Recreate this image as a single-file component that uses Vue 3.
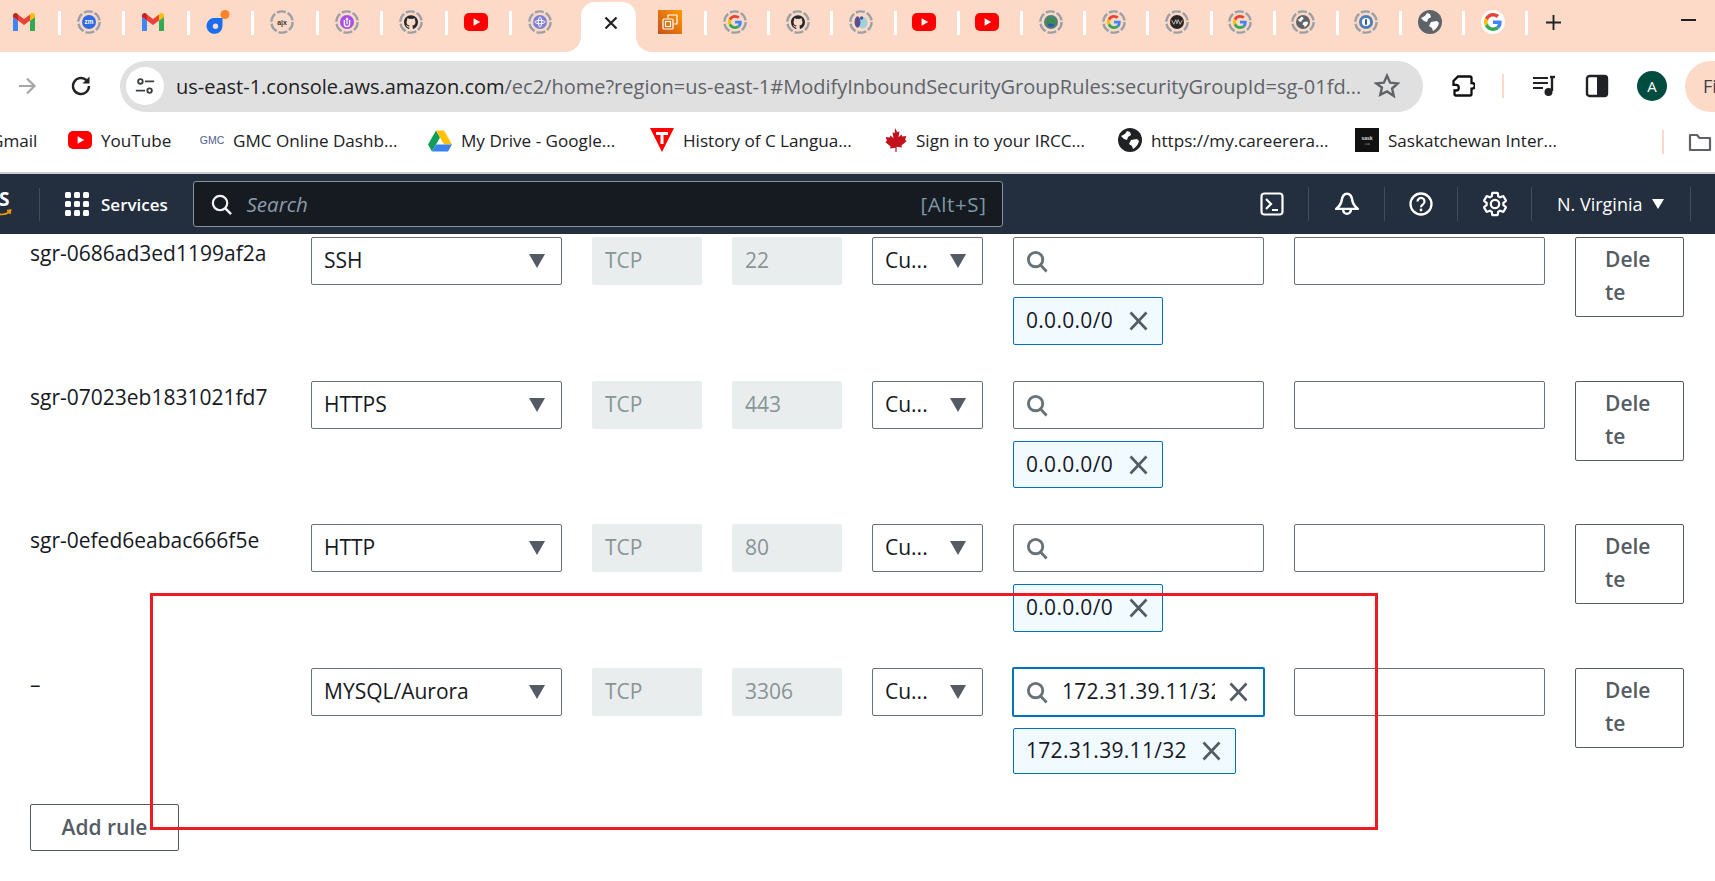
<template>
  <div class="page">
    <!-- icon sheet -->
    <svg class="sheet" aria-hidden="true">
      <symbol id="gmail" viewBox="0 0 24 24">
        <path fill="#4285f4" d="M1 21h5V10.500L1 7z" />
        <path fill="#34a853" d="M18 21h5V7l-5 3.500z" />
        <path fill="#ea4335" d="M6 10.500V4.500l6 4.600 6-4.600v6l-6 4.500z" />
        <path fill="#fbbc04" d="M18 4.500v6L23 7V5.500c0-2-2.600-3-4-2z" />
        <path fill="#c5221f" d="M1 7l5 3.500v-6l-1-1c-1.400-1-4 0-4 2z" />
      </symbol>
      <symbol id="zm" viewBox="0 0 24 24">
        <circle cx="12" cy="12" r="12" fill="#2d6ae3" />
        <text x="12" y="16" text-anchor="middle" font-size="11" font-weight="700" fill="#fff" font-family="Liberation Sans">zm</text>
      </symbol>
      <symbol id="ocean" viewBox="0 0 24 24">
        <circle cx="19" cy="4.500" r="4.500" fill="#fb8226" />
        <path fill="#1a6cf0" fill-rule="evenodd" d="M7 8h9.500v8A8 8 0 1 1 7 8zm2.500 5.500a2.700 2.700 0 1 0 0 5.400 2.700 2.700 0 0 0 0-5.400z" />
      </symbol>
      <symbol id="alx" viewBox="0 0 24 24">
        <text x="12" y="16.500" text-anchor="middle" font-size="12" font-weight="700" fill="#333" font-family="Liberation Sans">a|x</text>
      </symbol>
      <symbol id="upload" viewBox="0 0 24 24">
        <circle cx="12" cy="12" r="12" fill="#a94ee8" />
        <path fill="none" stroke="#fff" stroke-width="2.400" d="M7.500 8.500v7a4.500 4.500 0 0 0 9 0v-7" />
        <path fill="#fff" d="M12 4l3 4h-2v8h-2V8H9z" />
      </symbol>
      <symbol id="github" viewBox="0 0 24 24">
        <path fill="#24292f" d="M12 .5C5.370.5 0 5.870 0 12.500c0 5.300 3.440 9.800 8.200 11.390.6.110.820-.260.820-.580 0-.280-.010-1.040-.020-2.040-3.340.730-4.040-1.610-4.040-1.610-.550-1.390-1.330-1.760-1.330-1.760-1.090-.740.080-.730.080-.730 1.200.090 1.840 1.240 1.840 1.240 1.070 1.830 2.810 1.300 3.500 1 .110-.780.420-1.300.760-1.600-2.670-.3-5.470-1.330-5.470-5.930 0-1.310.470-2.380 1.240-3.220-.120-.3-.540-1.520.120-3.180 0 0 1.010-.320 3.300 1.230a11.500 11.500 0 0 1 6 0c2.290-1.550 3.300-1.230 3.300-1.230.660 1.660.240 2.880.120 3.180.770.840 1.240 1.910 1.240 3.220 0 4.610-2.810 5.630-5.480 5.920.430.370.810 1.100.810 2.220 0 1.600-.010 2.890-.010 3.290 0 .320.220.7.820.580C20.570 22.300 24 17.800 24 12.500 24 5.870 18.630.5 12 .5z" />
      </symbol>
      <symbol id="youtube" viewBox="0 0 24 24">
        <rect x="0" y="3" width="24" height="18" rx="5" fill="#f00" />
        <path fill="#fff" d="M9.600 8.200l6.600 3.800-6.600 3.800z" />
      </symbol>
      <symbol id="swirl" viewBox="0 0 24 24">
        <circle cx="12" cy="12" r="12" fill="#7d7fd6" />
        <path fill="none" stroke="#fff" stroke-width="1.700" d="M12 3c4 3 4 15 0 18M12 3c-4 3-4 15 0 18M3 12c3-4 15-4 18 0M3 12c3 4 15 4 18 0" />
      </symbol>
      <symbol id="aws" viewBox="0 0 24 24">
        <rect width="24" height="24" fill="url(#awsfill)" />
        <g fill="none" stroke="#fff" stroke-width="1.200">
          <path d="M10 8V5h9v9h-3" />
          <rect x="5" y="9" width="10" height="10" rx="1" />
          <rect x="7.500" y="11.500" width="5" height="5" />
        </g>
      </symbol>
      <symbol id="google" viewBox="0 0 48 48">
        <path fill="#EA4335" d="M24 9.500c3.540 0 6.710 1.220 9.210 3.600l6.850-6.850C35.900 2.380 30.470 0 24 0 14.620 0 6.510 5.380 2.560 13.220l7.980 6.190C12.430 13.720 17.740 9.500 24 9.500z" />
        <path fill="#4285F4" d="M46.980 24.550c0-1.570-.150-3.090-.380-4.550H24v9.020h12.940c-.580 2.960-2.260 5.480-4.780 7.180l7.730 6c4.510-4.180 7.090-10.360 7.090-17.650z" />
        <path fill="#FBBC05" d="M10.530 28.590c-.480-1.450-.760-2.990-.760-4.590s.270-3.140.760-4.590l-7.980-6.190C.920 16.460 0 20.120 0 24c0 3.880.920 7.540 2.560 10.780l7.970-6.190z" />
        <path fill="#34A853" d="M24 48c6.480 0 11.930-2.130 15.890-5.810l-7.730-6c-2.150 1.450-4.920 2.300-8.160 2.300-6.260 0-11.570-4.220-13.470-9.910l-7.980 6.190C6.510 42.620 14.620 48 24 48z" />
      </symbol>
      <symbol id="people" viewBox="0 0 24 24">
        <ellipse cx="15" cy="13" rx="8" ry="10" fill="#9fd0dc" />
        <ellipse cx="6" cy="12" rx="5" ry="10" fill="#5b4e8f" />
        <circle cx="13" cy="5" r="3" fill="#3d5c9a" />
      </symbol>
      <symbol id="earth" viewBox="0 0 24 24">
        <circle cx="12" cy="12" r="12" fill="#4f7f77" />
        <circle cx="12" cy="12" r="7" fill="#3a8f4e" />
        <path fill="#3257a8" d="M6 15h12l-2 5H8z" />
      </symbol>
      <symbol id="xm" viewBox="0 0 24 24">
        <circle cx="12" cy="12" r="12" fill="#2b2523" />
        <path fill="none" stroke="#ddd" stroke-width="1.300" d="M3 9l3.500 7L10 8l2 7 2-7 3.500 8L21 9" />
      </symbol>
      <symbol id="globe" viewBox="0 0 24 24">
        <circle cx="12" cy="12" r="12" fill="currentColor" />
        <path fill="#fff" d="M3 8c3-1 5-3 6-5l3 1 1 3-3 2-1 3-3-1zM13 12l6-1 2 2c-1 4-3 6-6 8l-1-3-3-2z" />
      </symbol>
      <symbol id="info" viewBox="0 0 24 24">
        <circle cx="12" cy="12" r="12" fill="#4c7fb8" />
        <circle cx="12" cy="12" r="7" fill="#fff" />
        <rect x="10.500" y="7" width="3" height="10" rx="1.500" fill="#23466e" />
      </symbol>
      <symbol id="gmc" viewBox="0 0 24 24">
        <text x="12" y="16" text-anchor="middle" font-size="10.500" fill="#4d628c" font-family="Liberation Sans">GMC</text>
      </symbol>
      <symbol id="drive" viewBox="0 0 24 24">
        <path fill="#0f9d58" d="M8 2.500L0 16.500l4 7 8-14z" />
        <path fill="#ffc107" d="M8 2.500h8l8 14h-8z" />
        <path fill="#3b82f0" d="M8 16.500h16l-4 7H4z" />
      </symbol>
      <symbol id="tsign" viewBox="0 0 24 24">
        <path fill="#f00" d="M0 0h24L12 24z" />
        <path fill="#fff" d="M6 4h12v3h-4.500v9h-3V7H6z" />
      </symbol>
      <symbol id="maple" viewBox="0 0 24 24">
        <path fill="#c1121c" d="M12 0l2.300 4.300 2.200-1-1 6 3-2.800.8 2 4-.6-1.300 4 1.800 1-5.400 4.600.6 2-5.400-.8V24h-1.200v-4.300L7 20.500l.6-2L2.200 13.900l1.800-1-1.300-4 4 .6.8-2 3 2.800-1-6 2.200 1z" />
      </symbol>
      <symbol id="sask" viewBox="0 0 24 24">
        <rect width="24" height="24" fill="#111" />
        <text x="12" y="12" text-anchor="middle" font-size="5" font-weight="700" fill="#ddd" font-family="Liberation Sans">sask</text>
        <text x="12" y="17" text-anchor="middle" font-size="4" fill="#aaa" font-family="Liberation Sans">.ca</text>
      </symbol>
    </svg>
    <svg class="sheet-defs" aria-hidden="true">
      <defs>
        <linearGradient id="awsfill" x1="0" y1="1" x2="1" y2="0">
          <stop offset="0" stop-color="#c8511b" />
          <stop offset="1" stop-color="#ff9900" />
        </linearGradient>
      </defs>
    </svg>

    <!-- tab strip -->
    <div class="tabstrip">
      <div
        v-for="(tab, i) in tabs"
        :key="i"
        :class="['tab', { active: tab.active, later: i > activeIndex, noline: i === activeIndex - 1 }]"
      >
        <svg v-if="tab.active" class="close" viewBox="0 0 16 16">
          <path d="M2.500 2.500l11 11M13.500 2.500l-11 11" fill="none" stroke="#202124" stroke-width="2.200" />
        </svg>
        <svg v-else class="fav" viewBox="0 0 24 24">
          <template v-if="tab.ring">
            <circle class="ring" cx="12" cy="12" r="10.600" />
            <use :href="'#' + tab.icon" x="5" y="5" width="14" height="14" />
          </template>
          <template v-else-if="tab.icon === 'google'">
            <circle cx="12" cy="12" r="12" fill="#fff" />
            <use href="#google" x="3" y="3" width="18" height="18" />
          </template>
          <use v-else :href="'#' + tab.icon" width="24" height="24" />
        </svg>
      </div>
      <svg class="plus" viewBox="0 0 16 16"><path d="M8 0v16M0 8h16" stroke="#202124" stroke-width="2" /></svg>
      <span class="minimize"></span>
    </div>

    <!-- toolbar -->
    <div class="toolbar">
      <svg class="tb-forward" viewBox="0 0 24 24"><path d="M4 12h15M12 4.500l7.500 7.500-7.500 7.500" fill="none" stroke="#a5a7aa" stroke-width="2.200" /></svg>
      <svg class="tb-reload" viewBox="0 0 24 24"><path d="M20 12a8 8 0 1 1-2.500-5.800" fill="none" stroke="#202124" stroke-width="2.400" /><path d="M20.500 2.500v7h-7z" fill="#202124" /></svg>
      <div class="omnibox">
        <span class="tune">
          <svg viewBox="0 0 24 24" width="22" height="22">
            <g fill="none" stroke="#3c4043" stroke-width="2">
              <circle cx="7" cy="7" r="2.500" /><path d="M12 7h10M2 17h10" /><circle cx="17" cy="17" r="2.500" />
            </g>
          </svg>
        </span>
        <span class="url"><b>us-east-1.console.aws.amazon.com</b>/ec2/home?region=us-east-1#ModifyInboundSecurityGroupRules:securityGroupId=sg-01fd...</span>
        <svg class="star" viewBox="0 0 24 24"><path d="M12 2.500l2.900 6.400 7 .7-5.200 4.700 1.500 6.900L12 17l-6.200 3.200 1.500-6.900L2.100 9.600l7-.7z" fill="none" stroke="#5f6368" stroke-width="2.200" /></svg>
      </div>
      <svg class="tb-puzzle" viewBox="0 0 24 24"><path d="M7 2.500h12a1.500 1.500 0 0 1 1.500 1.500v5h.5a2.800 2.800 0 0 1 0 5.600h-.5V20a1.500 1.500 0 0 1-1.500 1.500H5A1.500 1.500 0 0 1 3.500 20v-3.500H5a2.800 2.800 0 0 0 0-5.600H2.500V7z" fill="none" stroke="#111" stroke-width="2.300" /></svg>
      <span class="tb-sep"></span>
      <svg class="tb-media" viewBox="0 0 24 24">
        <path d="M1 4h15M1 9h15M1 14h10" stroke="#202124" stroke-width="2.200" />
        <path d="M20 3.500V17" stroke="#202124" stroke-width="2.400" /><path d="M18 3h5" stroke="#202124" stroke-width="2.400" /><circle cx="16.500" cy="18" r="4" fill="#202124" />
      </svg>
      <svg class="tb-panel" viewBox="0 0 24 24"><rect x="2" y="2" width="20" height="20" rx="2.500" fill="none" stroke="#202124" stroke-width="2.400" /><rect x="12" y="2" width="10" height="20" fill="#202124" /></svg>
      <span class="avatar">A</span>
      <span class="pill">Fi</span>
    </div>

    <!-- bookmarks -->
    <div class="bookmarks">
      <span class="bm-clip">Gmail</span>
      <span v-for="mark in bookmarks" :key="mark.label" class="bm" :style="{ width: mark.width + 'px' }">
        <svg class="bm-icon"><use :href="'#' + mark.icon" width="24" height="24" /></svg>
        {{ mark.label }}
      </span>
      <span class="bm-sep"></span>
      <svg class="bm-folder" viewBox="0 0 24 24"><path d="M2 5h7l2.500 3H22v12H2z" fill="none" stroke="#5f6368" stroke-width="2.200" stroke-linejoin="round" /></svg>
    </div>

    <!-- aws console nav -->
    <nav class="nav">
      <div class="logo">
        <span class="logo-s">S</span>
        <svg class="logo-smile" viewBox="0 0 14 8"><path d="M0 6c4 1 8 .5 11.500-2M9 2.800l3.500-.8-.6 3.800" fill="none" stroke="#f90" stroke-width="1.700" /></svg>
      </div>
      <div class="apps"><i v-for="n in 9" :key="n"></i></div>
      <span class="services">Services</span>
      <div class="searchbar">
        <svg viewBox="0 0 24 24" class="searchbar-icon"><circle cx="10.500" cy="10.500" r="7.500" fill="none" stroke="#f2f3f3" stroke-width="2.300" /><path d="M16 16l6 6" stroke="#f2f3f3" stroke-width="2.600" /></svg>
        <span class="searchbar-hint">Search</span>
        <span class="searchbar-key">[Alt+S]</span>
      </div>
      <div class="nav-tools">
        <span class="tool shell">
          <svg viewBox="0 0 24 24"><rect x="1.500" y="1.500" width="21" height="21" rx="3" fill="none" stroke="#fff" stroke-width="2.200" /><path d="M6 7l5 5-5 5M12 18h6" fill="none" stroke="#fff" stroke-width="2.200" /></svg>
        </span>
        <span class="tool bell">
          <svg viewBox="0 0 24 24"><path d="M12 2.500c3.500 0 4.500 3 5 6.500.4 3 2 5 5 7.500H2C5 14 6.600 12 7 9c.5-3.500 1.500-6.500 5-6.500z" fill="none" stroke="#fff" stroke-width="2.300" stroke-linejoin="round" /><path d="M8.500 17.500a3.500 3.500 0 0 0 7 0" fill="none" stroke="#fff" stroke-width="2.300" /></svg>
        </span>
        <span class="tool help">
          <svg viewBox="0 0 24 24"><circle cx="12" cy="12" r="10.500" fill="none" stroke="#fff" stroke-width="2.300" /><path d="M8.500 9.500a3.500 3.500 0 1 1 5.500 2.800c-1.300.9-2 1.500-2 2.900" fill="none" stroke="#fff" stroke-width="2.200" /><circle cx="12" cy="18" r="1.400" fill="#fff" /></svg>
        </span>
        <span class="tool gear">
          <svg viewBox="0 0 24 24"><path fill="none" stroke="#fff" stroke-width="1.900" d="M19.140 12.940c.04-.3.06-.61.06-.94 0-.32-.02-.64-.07-.94l2.030-1.580c.18-.14.23-.41.12-.61l-1.920-3.320c-.12-.22-.37-.29-.59-.22l-2.390.96c-.5-.38-1.030-.7-1.620-.94l-.36-2.540c-.04-.24-.24-.41-.48-.41h-3.840c-.24 0-.43.17-.47.41l-.36 2.540c-.59.24-1.130.57-1.620.94l-2.390-.96c-.22-.08-.47 0-.59.22L2.740 8.870c-.12.21-.08.47.12.61l2.030 1.580c-.05.3-.09.63-.09.94s.02.64.07.94l-2.030 1.580c-.18.14-.23.41-.12.61l1.920 3.320c.12.22.37.29.59.22l2.390-.96c.5.38 1.030.7 1.620.94l.36 2.540c.05.24.24.41.48.41h3.840c.24 0 .44-.17.47-.41l.36-2.540c.59-.24 1.130-.56 1.620-.94l2.390.96c.22.08.47 0 .59-.22l1.920-3.320c.12-.22.07-.47-.12-.61l-2.010-1.580zM12 15.600c-1.980 0-3.600-1.620-3.600-3.600s1.620-3.600 3.600-3.600 3.600 1.620 3.600 3.600-1.620 3.600-3.600 3.600z" /></svg>
        </span>
        <span class="region">N. Virginia <i class="region-caret"></i></span>
      </div>
    </nav>

    <!-- inbound rules form -->
    <main class="content">
      <div v-for="rule in rules" :key="rule.id + rule.type" class="rule">
        <div class="rule-id">{{ rule.id }}</div>
        <div class="control select">
          <span>{{ rule.type }}</span><i class="caret"></i>
        </div>
        <div class="control disabled">TCP</div>
        <div class="control disabled">{{ rule.port }}</div>
        <div class="control select">
          <span>Cu...</span><i class="caret"></i>
        </div>
        <div class="source">
          <div class="control search" :class="{ focused: rule.typed }">
            <svg class="lens" viewBox="0 0 24 24"><circle cx="10" cy="10" r="7.500" fill="none" stroke="#687078" stroke-width="3" /><path d="M15 15.500l6.500 7" stroke="#687078" stroke-width="3" /></svg>
            <template v-if="rule.typed">
              <span class="typed">{{ rule.typed }}</span>
              <svg class="cross" viewBox="0 0 20 20"><path d="M2 1.500l16 17M18 1.500l-16 17" stroke="#545b64" stroke-width="2.600" /></svg>
            </template>
          </div>
          <div class="chip" :style="{ height: rule.chipHeight + 'px' }">
            <span>{{ rule.cidr }}</span>
            <svg class="cross" viewBox="0 0 20 20"><path d="M2 1.500l16 17M18 1.500l-16 17" stroke="#545b64" stroke-width="2.600" /></svg>
          </div>
        </div>
        <div class="control"></div>
        <button class="btn delete">Delete</button>
      </div>
      <button class="btn add">Add rule</button>
      <div class="annotation"></div>
    </main>
  </div>
</template>

<script setup>
const tabs = [
  { icon: 'gmail' },
  { icon: 'zm', ring: true },
  { icon: 'gmail' },
  { icon: 'ocean' },
  { icon: 'alx', ring: true },
  { icon: 'upload', ring: true },
  { icon: 'github', ring: true },
  { icon: 'youtube' },
  { icon: 'swirl', ring: true },
  { active: true },
  { icon: 'aws' },
  { icon: 'google', ring: true },
  { icon: 'github', ring: true },
  { icon: 'people', ring: true },
  { icon: 'youtube' },
  { icon: 'youtube' },
  { icon: 'earth', ring: true },
  { icon: 'google', ring: true },
  { icon: 'xm', ring: true },
  { icon: 'google', ring: true },
  { icon: 'globe', ring: true },
  { icon: 'info', ring: true },
  { icon: 'globe' },
  { icon: 'google' }
]
const activeIndex = tabs.findIndex((t) => t.active)

const bookmarks = [
  { icon: 'youtube', label: 'YouTube', width: 101 },
  { icon: 'gmc', label: 'GMC Online Dashb...', width: 197 },
  { icon: 'drive', label: 'My Drive - Google...', width: 191 },
  { icon: 'tsign', label: 'History of C Langua...', width: 202 },
  { icon: 'maple', label: 'Sign in to your IRCC...', width: 204 },
  { icon: 'globe', label: 'https://my.careerera...', width: 206 },
  { icon: 'sask', label: 'Saskatchewan Inter...', width: 198 }
]

const rules = [
  { id: 'sgr-0686ad3ed1199af2a', type: 'SSH', port: '22', cidr: '0.0.0.0/0', chipHeight: 48 },
  { id: 'sgr-07023eb1831021fd7', type: 'HTTPS', port: '443', cidr: '0.0.0.0/0', chipHeight: 47 },
  { id: 'sgr-0efed6eabac666f5e', type: 'HTTP', port: '80', cidr: '0.0.0.0/0', chipHeight: 48 },
  { id: '–', type: 'MYSQL/Aurora', port: '3306', cidr: '172.31.39.11/32', typed: '172.31.39.11/32', chipHeight: 46 }
]
</script>

<style>
html,
body {
  margin: 0;
  overflow: hidden;
  background: #fff;
}
</style>

<style scoped>
.page {
  position: relative;
  width: 1715px;
  height: 881px;
  overflow: hidden;
  font-family: 'Open Sans', 'Noto Sans', sans-serif;
  color: #16191f;
}

.sheet {
  display: none;
}

.sheet-defs {
  position: absolute;
  width: 0;
  height: 0;
}

/* tab strip */
.tabstrip {
  display: flex;
  align-items: center;
  height: 52px;
  margin-left: -4px;
  background: #fcdac7;
}

.tab {
  position: relative;
  display: flex;
  align-items: center;
  justify-content: center;
  flex: none;
  box-sizing: border-box;
  width: 64.5px;
  height: 52px;
  padding-right: 8px;
  padding-bottom: 8px;
}

.tab::after {
  content: '';
  position: absolute;
  right: 0;
  top: 11px;
  width: 3px;
  height: 24px;
  background: #fff;
}

.tab.later {
  width: 63.2px;
}

.tab.active + .tab {
  width: 66.5px;
}

.tab.noline::after,
.tab.active::after {
  display: none;
}

.tab.active {
  width: 55px;
  margin-left: 4.500px;
  margin-right: 4.500px;
  padding: 0 0 8px 4px;
  margin-top: 2px;
  height: 50px;
  background: #fff;
  border-radius: 14px 14px 0 0;
}

.tab.active::before {
  content: '';
  position: absolute;
  left: -15px;
  right: -15px;
  bottom: 0;
  height: 15px;
  background:
    radial-gradient(circle at 0 0, #fcdac7 14.500px, #fff 15px) left bottom / 15px 15px no-repeat,
    radial-gradient(circle at 100% 0, #fcdac7 14.500px, #fff 15px) right bottom / 15px 15px no-repeat;
}

.fav {
  width: 24px;
  height: 24px;
  color: #5f6368;
}

.ring {
  fill: none;
  stroke: #9aa0a6;
  stroke-width: 2.400;
  stroke-dasharray: 9 2.100;
}

.close {
  width: 16px;
  height: 16px;
}

.plus {
  flex: none;
  width: 15px;
  height: 15px;
  margin-left: 18px;
  margin-bottom: 8px;
}

.minimize {
  flex: none;
  width: 15px;
  height: 1.500px;
  background: #202124;
  margin-left: 120px;
  margin-bottom: 12px;
}

/* browser toolbar */
.toolbar {
  display: flex;
  align-items: center;
  height: 68px;
  box-sizing: border-box;
}

.toolbar > svg {
  flex: none;
  width: 24px;
  height: 24px;
}

.tb-forward {
  margin-left: 15px;
}

.tb-reload {
  margin-left: 30px;
}

.omnibox {
  flex: none;
  display: flex;
  align-items: center;
  box-sizing: border-box;
  width: 1303px;
  height: 51px;
  margin-left: 27px;
  padding-left: 6px;
  border-radius: 26px;
  background: #e0e0e0;
}

.tune {
  display: flex;
  align-items: center;
  justify-content: center;
  flex: none;
  width: 38px;
  height: 38px;
  border-radius: 50%;
  background: #fff;
}

.url {
  flex: none;
  margin-left: 12px;
  width: 1186px;
  font-size: 20px;
  white-space: nowrap;
  overflow: hidden;
  color: #5f6368;
}

.url b {
  font-weight: 400;
  color: #202124;
}

.star {
  flex: none;
  width: 26px;
  height: 26px;
  margin-left: 12px;
}

.tb-puzzle {
  margin-left: 28px;
}

.tb-sep {
  flex: none;
  width: 2px;
  height: 24px;
  margin-left: 27px;
  background: #fcdac7;
}

.tb-media {
  margin-left: 28px;
}

.tb-panel {
  margin-left: 29px;
}

.avatar {
  display: flex;
  align-items: center;
  justify-content: center;
  flex: none;
  width: 30px;
  height: 30px;
  margin-left: 28px;
  border-radius: 50%;
  background: #004d40;
  color: #fff;
  font-size: 15px;
}

.pill {
  flex: none;
  box-sizing: border-box;
  width: 70px;
  height: 51px;
  margin-left: 18px;
  padding-left: 18px;
  border-radius: 26px;
  background: #fcdac7;
  color: #3c4043;
  font-size: 18px;
  line-height: 51px;
}

/* bookmarks bar */
.bookmarks {
  position: relative;
  display: flex;
  align-items: center;
  gap: 31px;
  box-sizing: content-box;
  height: 40px;
  padding-bottom: 12px;
  border-bottom: 2px solid #ccc;
  color: #202124;
  font-size: 17.100px;
  white-space: nowrap;
}

.bm-clip {
  margin-left: -9px;
  width: 46px;
  flex: none;
}

.bm {
  display: flex;
  align-items: center;
  gap: 9px;
  flex: none;
}

.bm-icon {
  flex: none;
  width: 24px;
  height: 24px;
  color: #202124;
}

.bm-sep {
  position: absolute;
  left: 1662px;
  top: 10px;
  width: 2px;
  height: 24px;
  background: #fcdac7;
}

.bm-folder {
  position: absolute;
  left: 1688px;
  top: 10px;
  width: 24px;
  height: 24px;
}

/* console nav */
.nav {
  display: flex;
  align-items: center;
  height: 60px;
  background: #232f3e;
  color: #fff;
}

.logo {
  position: relative;
  flex: none;
  width: 39px;
  height: 33px;
  border-right: 1px solid #414d5c;
}

.logo-s {
  position: absolute;
  left: -1px;
  top: 0;
  font-size: 19px;
  font-weight: 700;
  line-height: 22px;
}

.logo-smile {
  position: absolute;
  left: -2px;
  top: 20px;
  width: 14px;
  height: 8px;
}

.apps {
  display: grid;
  flex: none;
  grid-template-columns: repeat(3, 6px);
  grid-auto-rows: 6px;
  gap: 3px;
  margin-left: 25px;
}

.apps i {
  background: #fff;
  border-radius: 1.500px;
}

.services {
  flex: none;
  width: 66px;
  margin-left: 12px;
  font-size: 17px;
  font-weight: 600;
  white-space: nowrap;
}

.searchbar {
  display: flex;
  align-items: center;
  flex: none;
  box-sizing: border-box;
  width: 810px;
  height: 46px;
  margin-left: 25.500px;
  padding: 0 15px 0 16px;
  border: 1px solid #879596;
  border-radius: 3px;
  background: #161b22;
}

.searchbar-icon {
  flex: none;
  width: 23px;
  height: 23px;
}

.searchbar-hint {
  margin-left: 14px;
  color: #8d9ba8;
  font-size: 20.500px;
  font-style: italic;
}

.searchbar-key {
  margin-left: auto;
  color: #7d97a5;
  font-size: 20.500px;
  letter-spacing: 0.6px;
}

.nav-tools {
  display: flex;
  align-items: stretch;
  flex: none;
  height: 34px;
  margin-left: 232.500px;
}

.tool {
  display: flex;
  align-items: center;
  justify-content: center;
  flex: none;
  box-sizing: border-box;
  border-right: 1px solid #414d5c;
}

.tool.shell {
  width: 74px;
}

.tool.bell {
  width: 76px;
}

.tool.help {
  width: 73px;
}

.tool.gear {
  width: 74px;
}

.tool svg {
  width: 24px;
  height: 24px;
}

.tool.bell svg {
  width: 26px;
  height: 26px;
}

.tool.gear svg {
  width: 28px;
  height: 28px;
}

.region {
  display: flex;
  align-items: center;
  flex: none;
  box-sizing: border-box;
  width: 159px;
  padding-left: 25px;
  border-right: 1px solid #414d5c;
  font-size: 18px;
  white-space: pre;
}

.region-caret {
  width: 0;
  height: 0;
  margin-left: 5px;
  border-left: 6px solid transparent;
  border-right: 6px solid transparent;
  border-top: 10px solid #fff;
}

/* rule rows */
.content {
  position: relative;
  padding: 3px 0 0 30px;
  font-size: 21px;
}

.rule {
  display: grid;
  grid-template-columns: 251px 251px 110px 110px 111px 251px 251px 109px;
  column-gap: 30px;
  align-items: start;
  margin-bottom: 36px;
}

.rule-id {
  line-height: 32px;
  white-space: nowrap;
}

.control {
  display: flex;
  align-items: center;
  box-sizing: border-box;
  height: 48px;
  padding: 0 12px 2px;
  border: 1px solid #687078;
  border-radius: 2px;
  background: #fff;
}

.select {
  justify-content: space-between;
  white-space: nowrap;
  padding-right: 16px;
}

.caret {
  flex: none;
  width: 0;
  height: 0;
  margin-top: 2px;
  border-left: 8px solid transparent;
  border-right: 8px solid transparent;
  border-top: 14px solid #545b64;
}

.disabled {
  border-color: #eaeded;
  background: #eaeded;
  color: #879596;
}

.source {
  display: flex;
  flex-direction: column;
  gap: 12px;
}

.search.focused {
  border: 2px solid #0073bb;
  margin: -1px -1px -1px;
  padding: 0 14px 2px 12px;
  height: 50px;
}

.lens {
  flex: none;
  width: 23px;
  height: 23px;
  margin-top: 2px;
}

.typed {
  width: 153px;
  margin-left: 13px;
  overflow: hidden;
  white-space: nowrap;
  letter-spacing: 0.3px;
}

.cross {
  flex: none;
  width: 21px;
  height: 20px;
  margin-left: auto;
  margin-top: 2px;
}

.chip {
  display: flex;
  align-items: center;
  align-self: flex-start;
  box-sizing: border-box;
  gap: 14.500px;
  padding: 0 13px 2px 12px;
  border: 1px solid #0073bb;
  border-radius: 2px;
  background: #f1faff;
  white-space: nowrap;
  letter-spacing: 0.3px;
}

.chip .cross {
  margin-left: 0;
}

.btn {
  box-sizing: border-box;
  border: 1px solid #545b64;
  border-radius: 2px;
  background: #fff;
  color: #545b64;
  font: inherit;
  font-weight: 600;
}

.delete {
  width: 109px;
  height: 80px;
  padding: 0 27px 2px 29px;
  line-height: 33px;
  text-align: left;
  word-break: break-all;
}

.add {
  display: block;
  width: 149px;
  height: 47px;
  margin-top: -6px;
  padding: 0 0 2px;
}

.annotation {
  position: absolute;
  left: 150px;
  top: 359px;
  width: 1228px;
  height: 237px;
  box-sizing: border-box;
  border: 3px solid #ed1c24;
  pointer-events: none;
}
</style>
